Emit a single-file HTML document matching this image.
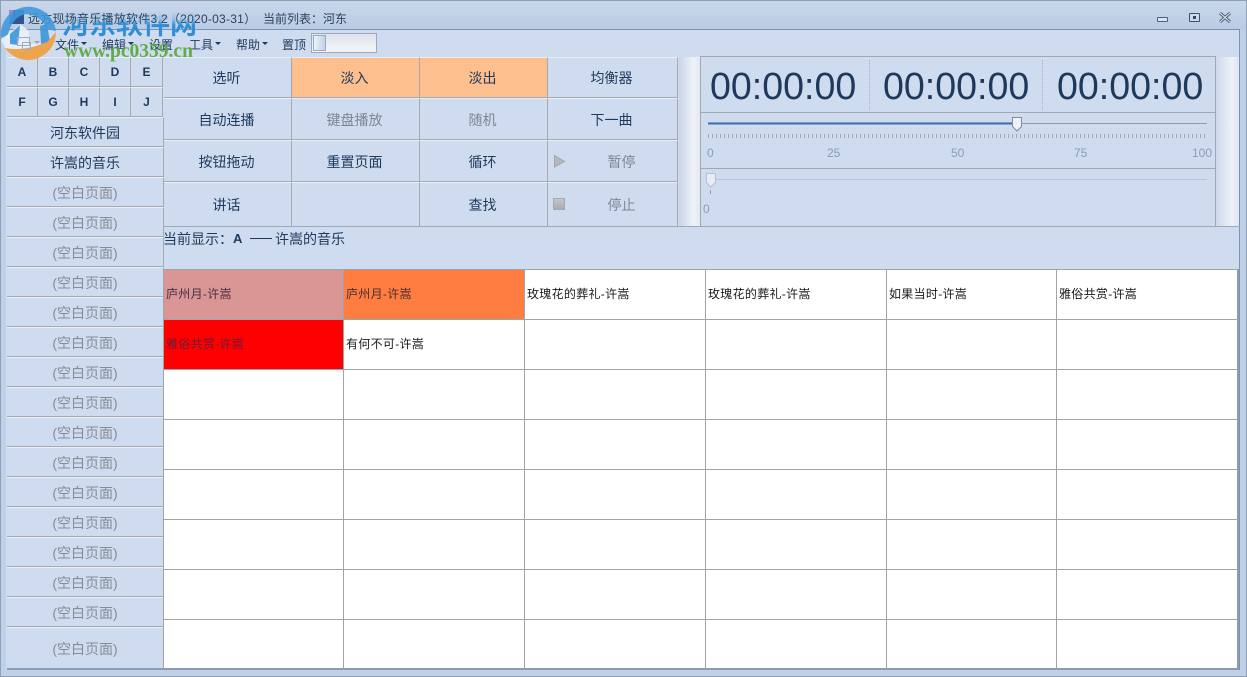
<!DOCTYPE html>
<html><head><meta charset="utf-8">
<style>
html,body{margin:0;padding:0;width:1247px;height:677px;overflow:hidden;background:#bfd1e8;}
body{position:relative;font-family:"Liberation Sans","Noto Sans CJK SC",sans-serif;color:#1e395b;}
div,span{position:absolute;box-sizing:border-box;white-space:nowrap;}
.t{font-size:12px;line-height:16px;color:#1e395b;}
.k{background:#cfdcf0;border-right:1px solid #a6a9ad;border-bottom:1px solid #a6a9ad;border-top:1px solid #e9eff8;text-align:center;font-size:14px;color:#1e395b;display:flex;align-items:center;justify-content:center;padding-top:1px;padding-right:2px;}
.l{font-weight:bold;font-size:12px;padding:0;}
.e{color:#868d98;font-size:14px;}
.p{left:7px;width:157px;height:30px;padding-right:0;}
.d{color:#7d8794;}
.o{background:#fdbf8d;}
.c{font-size:12px;line-height:16px;color:#1a1a1a;letter-spacing:.3px;}
.tm{font-size:37.600px;line-height:44px;color:#1e395b;top:64px;}
.n{font-size:12px;line-height:14px;color:#8d9cb4;top:146px;}
</style></head><body>
<div style="left:0;top:0;width:1247px;height:677px;border:1px solid #8f9fb6"></div>
<div style="left:1px;top:1px;width:1245px;height:29px;background:linear-gradient(#c9d7ea,#b9cce4)"></div>
<div class="t" style="left:28px;top:11px;color:#2b3f5c;letter-spacing:.25px">远方现场音乐播放软件3.2（2020-03-31）</div>
<div class="t" style="left:263px;top:11px;color:#2b3f5c">当前列表：河东</div>
<div style="left:1157px;top:17px;width:11px;height:5px;background:#dbe4f2;border:1px solid #4f6079;border-radius:1px"></div>
<div style="left:1189px;top:13px;width:11px;height:9px;border:1px solid #3f5069;border-radius:1px;background:#cddaee"><div style="left:3px;top:2px;width:3px;height:3px;background:#34465f"></div></div>
<svg style="position:absolute;left:1219px;top:12px" width="12" height="11"><path d="M1 1L11 10M11 1L1 10" stroke="#4a5a72" stroke-width="3"/><path d="M1 1L11 10M11 1L1 10" stroke="#e8eef7" stroke-width="1"/></svg>

<div style="left:6px;top:29px;width:1234px;height:641px;background:#cfdcf0;border-top:1px solid #7f92ad;border-right:1px solid #7f92ad;"></div>

<div class="t" style="left:55px;top:37px">文件</div><div class="t" style="left:102px;top:37px">编辑</div><div class="t" style="left:149px;top:37px">设置</div><div class="t" style="left:189px;top:37px">工具</div><div class="t" style="left:236px;top:37px">帮助</div><div class="t" style="left:282px;top:37px">置顶</div>
<svg style="position:absolute;left:0;top:0" width="300" height="50"><path d="M81 42h6l-3 3zM128 42h6l-3 3zM215 42h6l-3 3zM262 42h6l-3 3z" fill="#1e395b"/></svg>
<div style="left:311px;top:33px;width:66px;height:20px;border:1px solid #9aa9bf;background:linear-gradient(#dfe3ea,#f3f5f8)"><div style="left:1px;top:1px;width:13px;height:16px;border:1px solid #9aa9bf;background:linear-gradient(90deg,#eef2f8,#c3d1e4)"></div></div>

<div class="k l" style="left:7px;top:57px;width:31px;height:30px">A</div><div class="k l" style="left:38px;top:57px;width:31px;height:30px">B</div><div class="k l" style="left:69px;top:57px;width:31px;height:30px">C</div><div class="k l" style="left:100px;top:57px;width:31px;height:30px">D</div><div class="k l" style="left:131px;top:57px;width:32px;height:30px">E</div>
<div class="k l" style="left:7px;top:87px;width:31px;height:30px">F</div><div class="k l" style="left:38px;top:87px;width:31px;height:30px">G</div><div class="k l" style="left:69px;top:87px;width:31px;height:30px">H</div><div class="k l" style="left:100px;top:87px;width:31px;height:30px">I</div><div class="k l" style="left:131px;top:87px;width:32px;height:30px">J</div>

<div class="k p" style="top:117px">河东软件园</div>
<div class="k p" style="top:147px">许嵩的音乐</div>
<div class="k p e" style="top:177px">(空白页面)</div>
<div class="k p e" style="top:207px">(空白页面)</div>
<div class="k p e" style="top:237px">(空白页面)</div>
<div class="k p e" style="top:267px">(空白页面)</div>
<div class="k p e" style="top:297px">(空白页面)</div>
<div class="k p e" style="top:327px">(空白页面)</div>
<div class="k p e" style="top:357px">(空白页面)</div>
<div class="k p e" style="top:387px">(空白页面)</div>
<div class="k p e" style="top:417px">(空白页面)</div>
<div class="k p e" style="top:447px">(空白页面)</div>
<div class="k p e" style="top:477px">(空白页面)</div>
<div class="k p e" style="top:507px">(空白页面)</div>
<div class="k p e" style="top:537px">(空白页面)</div>
<div class="k p e" style="top:567px">(空白页面)</div>
<div class="k p e" style="top:597px">(空白页面)</div>
<div class="k p e" style="top:627px;height:43px;border-bottom:2px solid #8c9bb0">(空白页面)</div>

<div class="k" style="left:164px;top:57px;width:128px;height:41px">选听</div>
<div class="k o" style="left:292px;top:57px;width:128px;height:41px">淡入</div>
<div class="k o" style="left:420px;top:57px;width:128px;height:41px">淡出</div>
<div class="k" style="left:548px;top:57px;width:130px;height:41px">均衡器</div>
<div class="k" style="left:164px;top:98px;width:128px;height:42px">自动连播</div>
<div class="k d" style="left:292px;top:98px;width:128px;height:42px">键盘播放</div>
<div class="k d" style="left:420px;top:98px;width:128px;height:42px">随机</div>
<div class="k" style="left:548px;top:98px;width:130px;height:42px">下一曲</div>
<div class="k" style="left:164px;top:140px;width:128px;height:42px">按钮拖动</div>
<div class="k" style="left:292px;top:140px;width:128px;height:42px">重置页面</div>
<div class="k" style="left:420px;top:140px;width:128px;height:42px">循环</div>
<div class="k d" style="left:548px;top:140px;width:130px;height:42px;padding-left:18px;padding-right:0">暂停</div>
<svg style="position:absolute;left:554px;top:155px" width="12" height="13"><path d="M0.5 0.5L10.5 6.5L0.5 12Z" fill="#b4b8bd" stroke="#a3a8ae"/></svg>
<div class="k" style="left:164px;top:182px;width:128px;height:45px">讲话</div>
<div class="k" style="left:292px;top:182px;width:128px;height:45px"></div>
<div class="k" style="left:420px;top:182px;width:128px;height:45px">查找</div>
<div class="k d" style="left:548px;top:182px;width:130px;height:45px;padding-left:18px;padding-right:0">停止</div>
<div style="left:553px;top:198px;width:12px;height:12px;background:linear-gradient(#c4c6c9,#a9acb0);border:1px solid #a6a9ad"></div>

<div style="left:679px;top:57px;width:21px;height:169px;background:linear-gradient(90deg,#c8d5e8,#eef2f8 70%,#e2e8f2)"></div>
<div style="left:1216px;top:57px;width:23px;height:169px;background:linear-gradient(90deg,#cdd9ea,#eef2f8 70%,#dfe6f1)"></div>
<div style="left:700px;top:56px;width:516px;height:171px;background:#cfdcf0;border:1px solid #a0a8b4"></div>
<div style="left:700px;top:112px;width:516px;height:1px;background:#a0a8b4"></div>
<div style="left:700px;top:168px;width:516px;height:1px;background:#a0a8b4"></div>
<div style="left:869px;top:60px;height:50px;border-left:1px dotted #a9b4c4"></div>
<div style="left:1042px;top:60px;height:50px;border-left:1px dotted #a9b4c4"></div>
<div class="tm" style="left:710px">00:00:00</div>
<div class="tm" style="left:883px">00:00:00</div>
<div class="tm" style="left:1057px">00:00:00</div>

<div style="left:708px;top:123px;width:499px;height:1px;background:#8f9bab"></div>
<div style="left:708px;top:122px;width:305px;height:3px;background:linear-gradient(#a9c3e6,#2f5f9f 45%,#a9c3e6)"></div>
<div style="left:708px;top:134px;width:499px;height:4px;background:repeating-linear-gradient(90deg,#a0abba 0,#a0abba 1px,transparent 1px,transparent 4px)"></div>
<svg style="position:absolute;left:1011px;top:116px" width="12" height="16"><path d="M1.5 1.500H10.500V10.500L6 15L1.500 10.500Z" fill="#eef2f8" stroke="#7f8b9b"/></svg>
<div class="n" style="left:707px">0</div><div class="n" style="left:827px">25</div><div class="n" style="left:951px">50</div><div class="n" style="left:1074px">75</div><div class="n" style="left:1192px">100</div>
<div style="left:708px;top:179px;width:499px;height:1px;background:#b6c5da"></div>
<svg style="position:absolute;left:705px;top:172px" width="12" height="16"><path d="M1.500 1.500H10.500V10.500L6 15L1.500 10.500Z" fill="#e6ecf5" stroke="#b4c0d0"/></svg>
<div style="left:710px;top:190px;width:1px;height:4px;background:#8f9bab"></div>
<div class="n" style="left:703px;top:202px">0</div>

<div style="left:163px;top:226px;width:1077px;height:1px;background:#a0a8b4"></div>
<div class="t" style="left:163px;top:231px;font-size:14px;line-height:16px">当前显示：</div>
<div class="t" style="left:233px;top:231px;font-size:13px;line-height:16px;font-weight:bold">A</div>
<div style="left:250px;top:238px;width:22px;height:1px;background:#1e395b"></div>
<div class="t" style="left:275px;top:231px;font-size:14px;line-height:16px">许嵩的音乐</div>

<div style="left:163px;top:269px;width:1076px;height:401px;background:#fff;border:1px solid #a0a4a8;border-bottom:2px solid #8c9bb0;border-right:2px solid #8c9bb0"></div>
<div style="left:164px;top:270px;width:179px;height:49px;background:#d99694"></div>
<div style="left:344px;top:270px;width:180px;height:49px;background:#ff7d40"></div>
<div style="left:164px;top:320px;width:179px;height:49px;background:#ff0000"></div>
<div style="left:343px;top:270px;width:1px;height:399px;background:#a0a4a8"></div>
<div style="left:524px;top:270px;width:1px;height:399px;background:#a0a4a8"></div>
<div style="left:705px;top:270px;width:1px;height:399px;background:#a0a4a8"></div>
<div style="left:886px;top:270px;width:1px;height:399px;background:#a0a4a8"></div>
<div style="left:1056px;top:270px;width:1px;height:399px;background:#a0a4a8"></div>
<div style="left:164px;top:319px;width:1074px;height:1px;background:#a0a4a8"></div>
<div style="left:164px;top:369px;width:1074px;height:1px;background:#a0a4a8"></div>
<div style="left:164px;top:419px;width:1074px;height:1px;background:#a0a4a8"></div>
<div style="left:164px;top:469px;width:1074px;height:1px;background:#a0a4a8"></div>
<div style="left:164px;top:519px;width:1074px;height:1px;background:#a0a4a8"></div>
<div style="left:164px;top:569px;width:1074px;height:1px;background:#a0a4a8"></div>
<div style="left:164px;top:619px;width:1074px;height:1px;background:#a0a4a8"></div>
<div class="c" style="left:166px;top:286px;color:#4a2f45">庐州月-许嵩</div>
<div class="c" style="left:346px;top:286px;color:#4a2f2f">庐州月-许嵩</div>
<div class="c" style="left:527px;top:286px">玫瑰花的葬礼-许嵩</div>
<div class="c" style="left:708px;top:286px">玫瑰花的葬礼-许嵩</div>
<div class="c" style="left:889px;top:286px">如果当时-许嵩</div>
<div class="c" style="left:1059px;top:286px">雅俗共赏-许嵩</div>
<div class="c" style="left:166px;top:336px;color:#6b1a3a">雅俗共赏-许嵩</div>
<div class="c" style="left:346px;top:336px">有何不可-许嵩</div>

<svg style="position:absolute;left:0;top:0" width="60" height="64">
<path d="M9 10h9v13H9z" fill="#a884d8"/>
<path d="M14 10h10v14H9z" fill="#2f5596"/>
<path d="M1 38A27.500 27.500 0 0 1 56 31L47 29C43 20 36 15 27 14C17 15 10 24 8 35Z" fill="#3f97da" opacity=".88"/>
<path d="M1 40L20 24L29 31L29 44L42 43L20 52L5 48Z" fill="#eaf1f9" opacity=".88"/>
<path d="M10 34L20 25L18 45L10 44Z" fill="#3f97da" opacity=".92"/>
<path d="M40 26L47 24L50 42L41 44Z" fill="#3f97da" opacity=".92"/>
<path d="M5 48A28 28 0 0 0 56 32L47 42C36 47 20 51 5 48Z" fill="#ef9f44" opacity=".95"/>
<rect x="17.500" y="37.500" width="12" height="8" fill="none" stroke="#a2abba"/>
<rect x="22.500" y="42.500" width="8" height="7" fill="none" stroke="#a2abba"/>
<path d="M34 41h6l-3 3z" fill="#9aa4b2"/>
</svg>
<div style="left:62px;top:8px;width:136px;height:34px;font-size:27px;line-height:34px;font-weight:bold;color:transparent;background:linear-gradient(rgba(47,143,214,0) 10%,rgba(47,143,214,.3) 35%,#2f8fd6 50%);-webkit-background-clip:text;background-clip:text;">河东软件网</div>
<div style="left:64px;top:42px;font-family:'Liberation Serif',serif;font-size:19.500px;line-height:20px;font-weight:bold;color:#5aa83f;opacity:.92">www.pc0359.cn</div>
</body></html>
